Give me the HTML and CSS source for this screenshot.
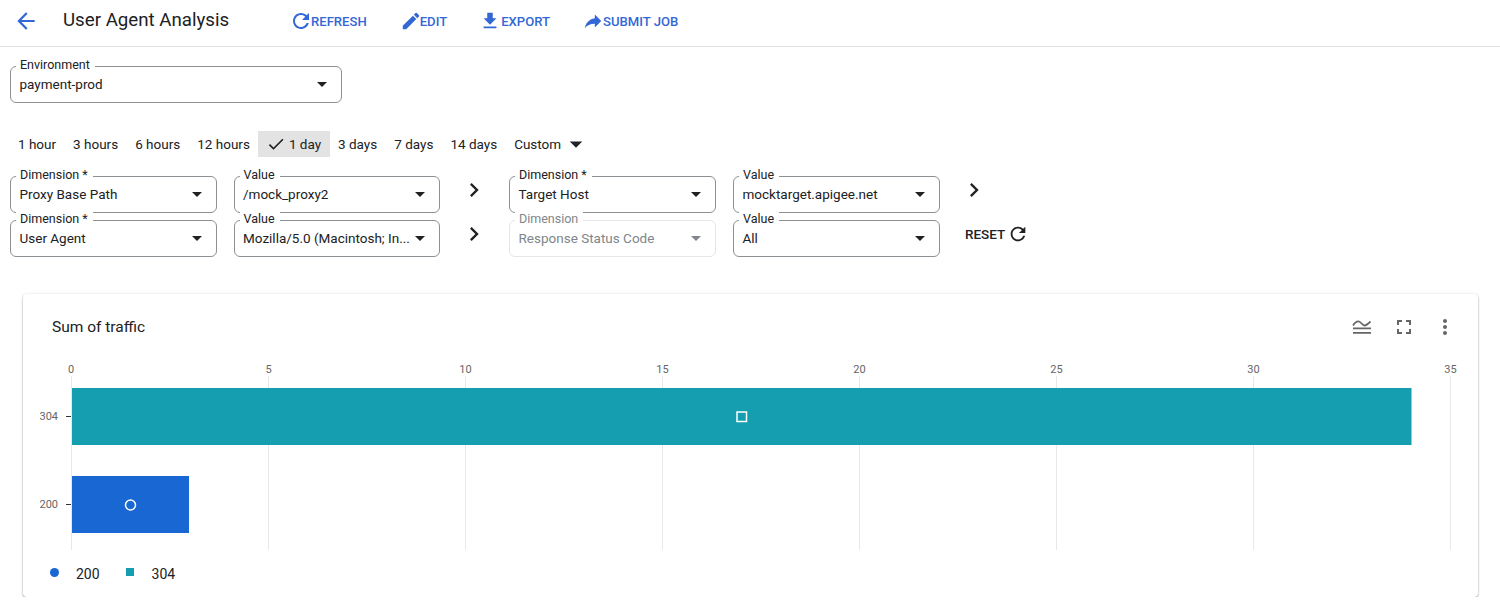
FILE: index.html
```html
<!DOCTYPE html>
<html lang="en">
<head>
  <meta charset="UTF-8">
  <title>User Agent Analysis</title>
  <link rel="stylesheet" href="styles.css">
</head>
<body>

<!-- Top bar -->
<header class="topbar">
  <svg class="back-icon" viewBox="0 0 24 24"><path d="M20 11H7.83l5.59-5.59L12 4l-8 8 8 8 1.41-1.41L7.83 13H20v-2z"/></svg>
  <h1 class="page-title">User Agent Analysis</h1>
  <nav class="actions">
    <a class="action action-refresh">
      <svg viewBox="0 0 24 24"><path d="M17.65 6.35C16.2 4.9 14.21 4 12 4c-4.42 0-7.99 3.58-7.99 8s3.57 8 7.99 8c3.73 0 6.84-2.55 7.73-6h-2.08c-.82 2.33-3.04 4-5.65 4-3.31 0-6-2.69-6-6s2.69-6 6-6c1.66 0 3.14.69 4.22 1.78L13 11h7V4l-2.35 2.35z"/></svg>REFRESH
    </a>
    <a class="action action-edit">
      <svg viewBox="0 0 24 24"><path d="M3 17.25V21h3.75L17.81 9.94l-3.75-3.75L3 17.25zM20.71 7.04c.39-.39.39-1.02 0-1.41l-2.34-2.34c-.39-.39-1.02-.39-1.41 0l-1.83 1.83 3.75 3.75 1.83-1.83z"/></svg>EDIT
    </a>
    <a class="action action-export">
      <svg viewBox="0 0 24 24"><path d="M19 9h-4V3H9v6H5l7 7 7-7zM5 18v2h14v-2H5z"/></svg>EXPORT
    </a>
    <a class="action action-submit">
      <svg viewBox="0 0 24 24"><path d="M14 9V5l7 7-7 7v-4.1c-5 0-8.5 1.6-11 5.1 1-5 4-10 11-11z"/></svg>SUBMIT JOB
    </a>
  </nav>
</header>

<main class="content">

  <!-- Environment -->
  <div class="field field-env">
    <span class="field-label">Environment</span>
    <span class="field-value">payment-prod</span>
    <svg class="drop-icon" viewBox="0 0 24 24"><path d="M7 10l5 5 5-5z"/></svg>
  </div>

  <!-- Time range -->
  <div class="ranges">
    <button class="range">1 hour</button>
    <button class="range">3 hours</button>
    <button class="range">6 hours</button>
    <button class="range">12 hours</button>
    <button class="range range-active">
      <svg class="check-icon" viewBox="0 0 24 24"><path d="M9 16.17L4.83 12l-1.42 1.41L9 19 21 7l-1.41-1.41z"/></svg>1 day
    </button>
    <button class="range">3 days</button>
    <button class="range">7 days</button>
    <button class="range">14 days</button>
    <button class="range range-custom">Custom
      <svg class="custom-icon" viewBox="0 0 24 24"><path d="M7 10l5 5 5-5z"/></svg>
    </button>
  </div>

  <!-- Dimension filters -->
  <div class="filters">
    <div class="field">
      <span class="field-label">Dimension *</span>
      <span class="field-value">Proxy Base Path</span>
      <svg class="drop-icon" viewBox="0 0 24 24"><path d="M7 10l5 5 5-5z"/></svg>
    </div>
    <div class="field">
      <span class="field-label">Value</span>
      <span class="field-value">/mock_proxy2</span>
      <svg class="drop-icon" viewBox="0 0 24 24"><path d="M7 10l5 5 5-5z"/></svg>
    </div>
    <svg class="next-icon" viewBox="0 0 24 24"><path d="M10 6L8.59 7.41 13.17 12l-4.58 4.59L10 18l6-6z"/></svg>
    <div class="field">
      <span class="field-label">Dimension *</span>
      <span class="field-value">Target Host</span>
      <svg class="drop-icon" viewBox="0 0 24 24"><path d="M7 10l5 5 5-5z"/></svg>
    </div>
    <div class="field">
      <span class="field-label">Value</span>
      <span class="field-value">mocktarget.apigee.net</span>
      <svg class="drop-icon" viewBox="0 0 24 24"><path d="M7 10l5 5 5-5z"/></svg>
    </div>
    <svg class="next-icon" viewBox="0 0 24 24"><path d="M10 6L8.59 7.41 13.17 12l-4.58 4.59L10 18l6-6z"/></svg>

    <div class="field">
      <span class="field-label">Dimension *</span>
      <span class="field-value">User Agent</span>
      <svg class="drop-icon" viewBox="0 0 24 24"><path d="M7 10l5 5 5-5z"/></svg>
    </div>
    <div class="field">
      <span class="field-label">Value</span>
      <span class="field-value">Mozilla/5.0 (Macintosh; In...</span>
      <svg class="drop-icon" viewBox="0 0 24 24"><path d="M7 10l5 5 5-5z"/></svg>
    </div>
    <svg class="next-icon" viewBox="0 0 24 24"><path d="M10 6L8.59 7.41 13.17 12l-4.58 4.59L10 18l6-6z"/></svg>
    <div class="field field-disabled">
      <span class="field-label">Dimension</span>
      <span class="field-value">Response Status Code</span>
      <svg class="drop-icon" viewBox="0 0 24 24"><path d="M7 10l5 5 5-5z"/></svg>
    </div>
    <div class="field">
      <span class="field-label">Value</span>
      <span class="field-value">All</span>
      <svg class="drop-icon" viewBox="0 0 24 24"><path d="M7 10l5 5 5-5z"/></svg>
    </div>
    <button class="reset">RESET
      <svg viewBox="0 0 24 24"><path d="M17.65 6.35C16.2 4.9 14.21 4 12 4c-4.42 0-7.99 3.58-7.99 8s3.57 8 7.99 8c3.73 0 6.84-2.55 7.73-6h-2.08c-.82 2.33-3.04 4-5.65 4-3.31 0-6-2.69-6-6s2.69-6 6-6c1.66 0 3.14.69 4.22 1.78L13 11h7V4l-2.35 2.35z"/></svg>
    </button>
  </div>

  <!-- Chart card -->
  <section class="card">
    <div class="card-head">
      <h2 class="card-title">Sum of traffic</h2>
      <div class="card-tools">
        <svg class="tool" viewBox="0 0 24 24"><path d="M3 10.500c2-3 4-4.500 6-4s3.500 4 5.500 4 4-2 6-4" fill="none" stroke="#666" stroke-width="1.800"/><path d="M3 12.500h18v1.800H3zM3 17h18v1.800H3z"/></svg>
        <svg class="tool" viewBox="0 0 24 24"><path d="M7 14H5v5h5v-2H7v-3zm-2-4h2V7h3V5H5v5zm12 7h-3v2h5v-5h-2v3zM14 5v2h3v3h2V5h-5z"/></svg>
        <svg class="tool" viewBox="0 0 24 24"><path d="M12 8c1.100 0 2-.9 2-2s-.9-2-2-2-2 .9-2 2 .9 2 2 2zm0 2c-1.100 0-2 .9-2 2s.9 2 2 2 2-.9 2-2-.9-2-2-2zm0 6c-1.100 0-2 .9-2 2s.9 2 2 2 2-.9 2-2-.9-2-2-2z"/></svg>
      </div>
    </div>

    <svg class="chart" viewBox="23 360 1455 192" width="1455" height="192">
      <g class="grid">
        <line x1="71.500" y1="376" x2="71.500" y2="550"/>
        <line x1="268.500" y1="376" x2="268.500" y2="550"/>
        <line x1="465.500" y1="376" x2="465.500" y2="550"/>
        <line x1="662.500" y1="376" x2="662.500" y2="550"/>
        <line x1="859.500" y1="376" x2="859.500" y2="550"/>
        <line x1="1056.500" y1="376" x2="1056.500" y2="550"/>
        <line x1="1253.500" y1="376" x2="1253.500" y2="550"/>
        <line x1="1450.500" y1="376" x2="1450.500" y2="550"/>
      </g>
      <g class="axis-x">
        <text x="71" y="373">0</text>
        <text x="268.500" y="373">5</text>
        <text x="465.500" y="373">10</text>
        <text x="662.500" y="373">15</text>
        <text x="859.500" y="373">20</text>
        <text x="1056.500" y="373">25</text>
        <text x="1253.500" y="373">30</text>
        <text x="1450.500" y="373">35</text>
      </g>
      <g class="axis-y">
        <text x="58" y="420">304</text>
        <text x="58" y="508">200</text>
        <line x1="66" y1="416.500" x2="71" y2="416.500"/>
        <line x1="66" y1="504.500" x2="71" y2="504.500"/>
      </g>
      <rect class="bar-teal" x="72" y="388" width="1339.500" height="57"/>
      <rect class="bar-blue" x="72" y="476" width="117" height="57"/>
      <rect class="marker" x="737" y="412" width="9.500" height="9.500"/>
      <circle class="marker" cx="130.500" cy="505" r="5"/>
    </svg>

    <div class="legend">
      <span class="legend-dot"></span><span class="legend-text">200</span>
      <span class="legend-square"></span><span class="legend-text legend-text-last">304</span>
    </div>
  </section>
</main>

</body>
</html>
```

FILE: styles.css
```css
* {
  box-sizing: border-box;
}

body {
  font-family: 'Roboto', sans-serif;
  background: white;
  color: #202124;
  margin: 0;
}

/* Top bar */
.topbar {
  display: flex;
  align-items: center;
  height: 47px;
  padding: 0 0 4px 13px;
  border-bottom: 1px solid #e0e0e0;
}

.back-icon {
  width: 26px;
  height: 26px;
  fill: #3367d6;
  flex: none;
}

.page-title {
  width: 226px;
  margin: 0 0 2px 24px;
  font-size: 18.700px;
  font-weight: 400;
  color: #202124;
  white-space: nowrap;
}

.actions {
  display: flex;
  align-items: center;
}

.action {
  display: flex;
  align-items: center;
  font-size: 13.100px;
  font-weight: 500;
  color: #3367d6;
  white-space: nowrap;
}

.action svg {
  width: 22px;
  height: 22px;
  fill: #3367d6;
  margin-right: -2px;
}

.action-refresh svg {
  width: 24px;
  height: 24px;
}

.action-edit { margin-left: 33px; }
.action-export { margin-left: 32px; }
.action-export svg { margin-right: 0; }
.action-submit { margin-left: 32px; }
.action-submit svg { margin-right: -1px; }

/* Form fields */
.content {
  padding: 19px 0 0 10px;
}

.field {
  position: relative;
  display: flex;
  align-items: center;
  height: 37px;
  padding: 0 9px 1px 8.500px;
  border: 1px solid #8c9196;
  border-radius: 6px;
  font-size: 13.500px;
}

.field-env {
  width: 331.500px;
}

.field-label {
  position: absolute;
  top: -10px;
  left: 5px;
  padding: 0 5px 0 4px;
  background: white;
  font-size: 12.500px;
  line-height: 15px;
  font-weight: 400;
  white-space: nowrap;
}

.field-value {
  flex: 1;
  min-width: 0;
  white-space: nowrap;
}

.drop-icon {
  width: 24px;
  height: 24px;
  flex: none;
  margin-right: -2px;
  fill: #202124;
}

.field-disabled {
  border-color: #e4e6e8;
  color: #80868b;
}

.field-disabled .drop-icon {
  fill: #80868b;
}

/* Time range */
.ranges {
  display: flex;
  align-items: center;
  margin-top: 28px;
  gap: 1px;
}

.range {
  display: flex;
  align-items: center;
  height: 26px;
  padding: 0 8px;
  border: none;
  background: none;
  font-family: inherit;
  font-size: 13.500px;
  color: #202124;
  white-space: nowrap;
}

.range-active {
  background: #e3e3e3;
  margin: 0 -1px;
  padding-right: 9px;
}

.check-icon {
  width: 20px;
  height: 20px;
  margin: 0 3px 0 0;
  fill: #202124;
}

.custom-icon {
  width: 30px;
  height: 30px;
  fill: #202124;
}

/* Dimension filters */
.filters {
  display: grid;
  grid-template-columns: 206.500px 206.500px 35px 207px 207px 90px;
  column-gap: 17px;
  row-gap: 7px;
  align-items: center;
  margin-top: 19px;
}

.next-icon {
  width: 28px;
  height: 28px;
  margin: 0 0 9px 3px;
  fill: #202124;
}

.reset {
  display: flex;
  align-items: center;
  gap: 2px;
  padding: 0 0 10px 8px;
  border: none;
  background: none;
  font-family: inherit;
  font-size: 13.500px;
  font-weight: 500;
  color: #202124;
}

.reset svg {
  width: 22px;
  height: 22px;
  fill: #202124;
}

/* Chart card */
.card {
  width: 1455px;
  height: 303px;
  margin: 37px 0 0 13px;
  background: white;
  border-radius: 4px;
  box-shadow: 0 1px 2px rgba(0,0,0,0.4), 0 0 4px rgba(0,0,0,0.06);
}

.card-head {
  display: flex;
  align-items: center;
  justify-content: space-between;
  height: 66px;
  padding: 0 21px 0 29px;
}

.card-title {
  margin: 0;
  font-size: 15.500px;
  font-weight: 400;
  color: #202124;
}

.card-tools {
  display: flex;
  gap: 17.500px;
}

.tool {
  width: 24px;
  height: 24px;
  fill: #666;
}

.chart {
  display: block;
}

.grid line {
  stroke: #e8e8e8;
  stroke-width: 1;
}

.axis-x text {
  font-family: 'Roboto', sans-serif;
  font-size: 11px;
  fill: #666;
  text-anchor: middle;
}

.axis-y text {
  font-family: 'Roboto', sans-serif;
  font-size: 11px;
  fill: #666;
  text-anchor: end;
}

.axis-y line {
  stroke: #333;
  stroke-width: 1;
}

.bar-teal {
  fill: #149eb0;
}

.bar-blue {
  fill: #1967d2;
}

.marker {
  fill: none;
  stroke: white;
  stroke-width: 1.500;
}

/* Legend */
.legend {
  display: flex;
  align-items: center;
  height: 44px;
  padding-left: 27px;
  font-size: 14px;
}

.legend-dot {
  width: 9px;
  height: 9px;
  border-radius: 50%;
  background: #1967d2;
  margin-top: -4px;
}

.legend-square {
  width: 8px;
  height: 8px;
  background: #149eb0;
  margin: -4px 0 0 26px;
}

.legend-text {
  margin-left: 17px;
}

.legend-text-last {
  margin-left: 18px;
}
```
